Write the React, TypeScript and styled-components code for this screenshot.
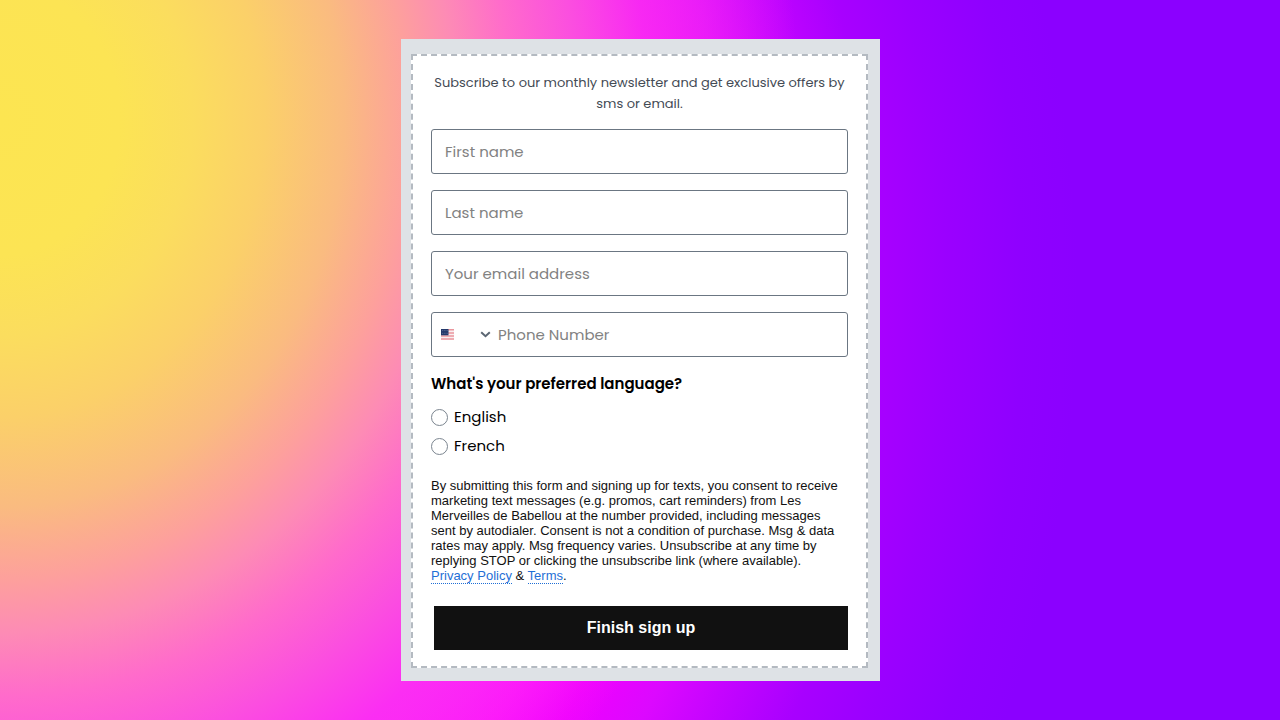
import React from 'react';
import styled, { createGlobalStyle } from 'styled-components';

const sans = "'Liberation Sans', Arial, sans-serif";
const rounded = "Poppins, Inter, sans-serif";

const GlobalStyle = createGlobalStyle`
  *, *::before, *::after { box-sizing: border-box; }
  body { margin: 0; background: #8b00ff; }
`;

const Page = styled.main`
  display: flex;
  justify-content: center;
  align-items: flex-start;
  min-height: 100vh;
  padding: 39px 16px 39px 17px;
  background:
    radial-gradient(ellipse 800px 900px at 0 120px,
      #fce551 0%, #fce454 15%, #fbdd5e 24%, #fbd069 33%, #fabb80 43%, #fda09c 51%,
      #fd8bb5 57%, #ff6bcb 64%, #fb4fdf 72%,
      rgba(250, 50, 240, 0.8) 81%, rgba(255, 30, 255, 0) 100%),
    radial-gradient(ellipse 1100px 1200px at 0 300px,
      #ff1cff 0%, #ff1cff 49%, #fd0cff 57%, #f000ff 62%, #dc08ff 68%, #c604ff 73%,
      #a800ff 80%, #9b00ff 86%, #8f00ff 93%, #8b00ff 98%);
`;

const Card = styled.section`
  width: 100%;
  max-width: 479px;
  padding: 15px 12px 13px 10px;
  background: #dee2e6;
`;

const Form = styled.form`
  display: flex;
  flex-direction: column;
  padding: 16px 18px;
  background: #fff;
  border: 2px dashed #b4bac1;
`;

const Intro = styled.p`
  margin: 0 0 15px;
  text-align: center;
  color: #444b55;
  font: 400 13px/21px ${rounded};
`;

const Fields = styled.div`
  display: flex;
  flex-direction: column;
  gap: 16px;
`;

const TextInput = styled.input`
  width: 100%;
  height: 45px;
  padding: 0 13px;
  border: 1px solid #6b7682;
  border-radius: 3px;
  background: #fff;
  color: #000;
  font: 400 15px/24px ${rounded};
  &::placeholder { color: #828282; opacity: 1; }
`;

const PhoneBox = styled.div`
  display: flex;
  align-items: center;
  height: 45px;
  border: 1px solid #6b7682;
  border-radius: 3px;
`;

const CountryPicker = styled.div`
  position: relative;
  display: flex;
  align-items: center;
  justify-content: space-between;
  flex: none;
  width: 61px;
  height: 100%;
  padding: 0 2px 0 9px;
`;

const CountrySelect = styled.select`
  position: absolute;
  inset: 0;
  width: 100%;
  opacity: 0;
`;

const PhoneInput = styled.input`
  flex: 1;
  min-width: 0;
  height: 100%;
  padding: 0 5px;
  border: 0;
  background: transparent;
  font: 400 15px/24px ${rounded};
  &::placeholder { color: #828282; opacity: 1; }
`;

const Languages = styled.fieldset`
  display: flex;
  flex-direction: column;
  gap: 5px;
  margin: 15px 0 0;
  padding: 0;
  border: 0;
`;

const Question = styled.legend`
  margin-bottom: 10px;
  padding: 0;
  color: #000;
  font: 600 15px/23px ${rounded};
`;

const Choice = styled.label`
  display: flex;
  align-items: center;
  gap: 6px;
  color: #000;
  font: 400 15px/24px ${rounded};
`;

const Radio = styled.input`
  appearance: none;
  width: 17px;
  height: 17px;
  margin: 0;
  border: 1px solid #7b858f;
  border-radius: 50%;
  background: #fff;
  &:checked { border: 5px solid #111; }
`;

const Consent = styled.p`
  margin: 20px 0 0;
  color: #111;
  font: 400 13px/15px ${sans};
`;

const PolicyLink = styled.a`
  color: #1f6fd6;
  white-space: nowrap;
  text-decoration: none;
  border-bottom: 1px dotted #1f6fd6;
`;

const Submit = styled.button`
  height: 44px;
  margin: 23px 0 0 3px;
  border: 0;
  background: #111;
  color: #fff;
  font: 700 16px/20px ${sans};
`;

const Flag = () => (
  <svg width="13" height="11" viewBox="0 0 13 11" aria-hidden="true">
    <rect width="13" height="11" fill="#f8eef0" />
    <path d="M0 .8h13M0 3.9h13M0 7h13M0 10.1h13" stroke="#ea969d" strokeWidth="1.5" />
    <rect width="7.5" height="6.3" fill="#24396b" />
    <path d="M1 1.6h6M1 4.3h6" stroke="#8290b3" strokeWidth=".7" strokeDasharray=".8 1" />
  </svg>
);

const Chevron = () => (
  <svg width="11" height="7" viewBox="0 0 11 7" fill="none" aria-hidden="true">
    <path d="M1.2 1.3 5.5 5.2 9.8 1.3" stroke="#5b6673" strokeWidth="2" />
  </svg>
);

export default function App() {
  return (
    <>
      <GlobalStyle />
      <Page>
        <Card>
          <Form onSubmit={(e) => e.preventDefault()}>
            <Intro>Subscribe to our monthly newsletter and get exclusive offers by sms or email.</Intro>
            <Fields>
              <TextInput type="text" aria-label="First name" placeholder="First name" />
              <TextInput type="text" aria-label="Last name" placeholder="Last name" />
              <TextInput type="email" aria-label="Your email address" placeholder="Your email address" />
              <PhoneBox>
                <CountryPicker>
                  <Flag />
                  <Chevron />
                  <CountrySelect aria-label="Country" defaultValue="US">
                    <option value="US" label="US" />
                  </CountrySelect>
                </CountryPicker>
                <PhoneInput type="tel" aria-label="Phone Number" placeholder="Phone Number" />
              </PhoneBox>
            </Fields>
            <Languages>
              <Question>What's your preferred language?</Question>
              <Choice><Radio type="radio" name="language" value="en" />English</Choice>
              <Choice><Radio type="radio" name="language" value="fr" />French</Choice>
            </Languages>
            <Consent>
              By submitting this form and signing up for texts, you consent to receive marketing text
              messages (e.g. promos, cart reminders) from Les Merveilles de Babellou at the number
              provided, including messages sent by autodialer. Consent is not a condition of purchase.
              Msg &amp; data rates may apply. Msg frequency varies. Unsubscribe at any time by replying
              STOP or clicking the unsubscribe link (where available).{' '}
              <PolicyLink href="#privacy">Privacy Policy</PolicyLink> &amp; <PolicyLink href="#terms">Terms</PolicyLink>.
            </Consent>
            <Submit type="submit">Finish sign up</Submit>
          </Form>
        </Card>
      </Page>
    </>
  );
}
